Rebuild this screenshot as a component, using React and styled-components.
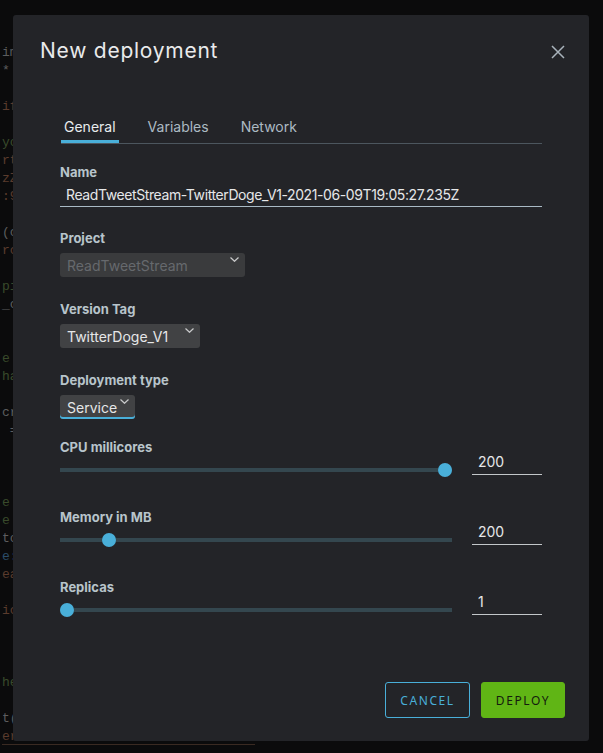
import React from "react"
import styled, { createGlobalStyle } from "styled-components"

const GlobalStyle = createGlobalStyle`
  html, body {
    margin: 0;
    padding: 0;
    background: #0b0b0c;
  }
  body {
    font-family: Inter, "Noto Sans", sans-serif;
  }
  * {
    box-sizing: border-box;
  }
`

const Page = styled.div`
  position: relative;
  width: 603px;
  height: 753px;
  overflow: hidden;
  background: #0b0b0c;
`

const Editor = styled.pre`
  margin: 0;
  padding: 44px 0 0 2px;
  font-family: "Liberation Mono", "DejaVu Sans Mono", monospace;
  font-size: 13px;
  line-height: 18px;
  white-space: pre;
`

const Code = styled.span`
  display: inline-block;
  width: ${p => (p.$underline ? "253px" : "auto")};
  height: 17px;
  color: ${p => p.$tone};
  border-bottom: 1px solid ${p => (p.$underline ? "#3a2a22" : "transparent")};
`

const Modal = styled.div`
  position: absolute;
  left: 13px;
  top: 15px;
  width: 576px;
  height: 726px;
  background: #232428;
  border-radius: 3px;
  display: flex;
  flex-direction: column;
  padding: 22px 24px 23px 27px;
`

const Header = styled.div`
  display: flex;
  justify-content: space-between;
  align-items: flex-start;
`

const Title = styled.h3`
  margin: 0;
  font-size: 21px;
  line-height: 28px;
  font-weight: 400;
  letter-spacing: 0.75px;
  color: #e9eaeb;
`

const Close = styled.button`
  margin-top: 8px;
  padding: 0;
  border: 0;
  background: none;
  width: 14px;
  height: 14px;
  display: flex;
`

const Body = styled.div`
  margin: 52px 23px 0 20px;
`

const Tabs = styled.div`
  display: flex;
  margin-left: 1px;
  border-bottom: 1px solid #4c565e;
`

const Tab = styled.div`
  height: 26px;
  line-height: 20px;
  font-size: 14px;
  padding: 0 3px;
  margin-right: 26px;
  color: ${p => (p.$active ? "#e8ecee" : "#acbac3")};
  box-shadow: ${p => (p.$active ? "inset 0 -3px 0 #49afd9" : "none")};
`

const Form = styled.div`
  margin-top: 20px;
`

const Field = styled.div`
  margin-bottom: ${p => p.$gap}px;
`

const Label = styled.label`
  display: block;
  height: 16px;
  font-size: 13px;
  line-height: 16px;
  font-weight: 700;
  color: #b8c4cb;
`

const TextInput = styled.input`
  display: block;
  width: 100%;
  height: 24px;
  margin-top: 3px;
  padding: 0 6px;
  border: 0;
  border-bottom: 1px solid #a9bac5;
  background: transparent;
  font-family: inherit;
  font-size: 14px;
  letter-spacing: -0.4px;
  color: #e6e7e8;
  outline: none;
`

const Select = styled.div`
  display: flex;
  width: ${p => p.$w}px;
  height: 24px;
  margin-top: 7px;
  padding: 0 6px 0 7px;
  border-radius: 3px;
  background: ${p => (p.$disabled ? "#3a3b3d" : "#414244")};
  box-shadow: ${p => (p.$focus ? "inset 0 -2px 0 #49afd9" : "none")};
  font-size: 14px;
  line-height: 26px;
  color: ${p => (p.$disabled ? "#66696d" : "#e6e7e8")};
`

const Chevron = styled.svg`
  margin-left: auto;
  margin-top: 4px;
  flex: none;
`

const SliderRow = styled.div`
  display: flex;
  align-items: flex-start;
  gap: 20px;
`

const Slider = styled.div`
  position: relative;
  flex: 1;
  height: 14px;
  margin-top: 8px;
`

const Track = styled.div`
  height: 4px;
  margin-top: 5px;
  background: #34474f;
`

const Thumb = styled.div`
  position: absolute;
  top: 0;
  width: 14px;
  height: 14px;
  border-radius: 50%;
  background: #49afd9;
`

const NumInput = styled.input`
  width: 70px;
  height: 20px;
  padding: 0 6px 7px;
  border: 0;
  border-bottom: 1px solid #c3c7ca;
  background: transparent;
  font-family: inherit;
  font-size: 14px;
  color: #e6e7e8;
  outline: none;
`

const Footer = styled.div`
  margin-top: auto;
  display: flex;
  justify-content: flex-end;
  gap: 11px;
`

const Button = styled.button`
  width: ${p => p.$w}px;
  height: 36px;
  border-radius: 3px;
  border: 1px solid ${p => (p.$primary ? "#60b515" : "#49afd9")};
  background: ${p => (p.$primary ? "#60b515" : "transparent")};
  color: ${p => (p.$primary ? "#141c0e" : "#49afd9")};
  font-family: "Noto Sans", sans-serif;
  font-size: 12px;
  letter-spacing: 1.6px;
  padding: 0;
`

// only the first columns of the editor peek out from behind the modal
const lines = [
  ["im", "#5c5d5e"],
  ["*", "#5c5d5e"],
  [""],
  ["if", "#5a3b2d"],
  [""],
  ["yo", "#394a2b"],
  ["rt", "#5a3b2d"],
  ["zZ", "#5a3b2d"],
  [":9", "#5a3b2d"],
  [""],
  ["(c", "#5c5d5e"],
  ["rc", "#5a3b2d"],
  [""],
  ["pi", "#394a2b"],
  ["_c", "#5c5d5e"],
  [""],
  [""],
  ["e", "#394a2b"],
  ["ha", "#394a2b"],
  [""],
  ["cr", "#5c5d5e"],
  [" =", "#5c5d5e"],
  [""],
  [""],
  [""],
  ["e", "#394a2b"],
  ["e", "#394a2b"],
  ["to", "#5c5d5e"],
  ["e:", "#2c4d69"],
  ["ea", "#5a3b2d"],
  [""],
  ["ic", "#5a3b2d"],
  [""],
  [""],
  [""],
  ["he", "#394a2b"],
  [""],
  ["t(", "#5c5d5e"],
  ["er", "#5a3b2d", true],
]

function Caret() {
  return (
    <Chevron width="9" height="5" viewBox="0 0 9 5">
      <path d="M0.5 0.5 L4.5 4.3 L8.5 0.5" fill="none" stroke="#c9cacb" strokeWidth="1.2" />
    </Chevron>
  )
}

function RangeField({ label, value, frac, gap }) {
  return (
    <Field $gap={gap}>
      <Label>{label}</Label>
      <SliderRow>
        <Slider>
          <Track />
          <Thumb style={{ left: `calc((100% - 14px) * ${frac})` }} />
        </Slider>
        <NumInput defaultValue={value} />
      </SliderRow>
    </Field>
  )
}

export default function App() {
  return (
    <Page>
      <GlobalStyle />
      <Editor>
        {lines.map(([text, tone, underline], i) => (
          <div key={i}>
            <Code $tone={tone} $underline={underline}>{text || " "}</Code>
          </div>
        ))}
      </Editor>
      <Modal>
        <Header>
          <Title>New deployment</Title>
          <Close aria-label="Close">
            <svg width="14" height="14" viewBox="0 0 14 14">
              <path d="M1 1 L13 13 M13 1 L1 13" stroke="#a9b3bb" strokeWidth="1.5" />
            </svg>
          </Close>
        </Header>
        <Body>
          <Tabs>
            <Tab $active>General</Tab>
            <Tab>Variables</Tab>
            <Tab>Network</Tab>
          </Tabs>
          <Form>
            <Field $gap={23}>
              <Label>Name</Label>
              <TextInput defaultValue="ReadTweetStream-TwitterDoge_V1-2021-06-09T19:05:27.235Z" />
            </Field>
            <Field $gap={24}>
              <Label>Project</Label>
              <Select $w={185} $disabled>
                ReadTweetStream
                <Caret />
              </Select>
            </Field>
            <Field $gap={24}>
              <Label>Version Tag</Label>
              <Select $w={140}>
                TwitterDoge_V1
                <Caret />
              </Select>
            </Field>
            <Field $gap={20}>
              <Label>Deployment type</Label>
              <Select $w={75} $focus>
                Service
                <Caret />
              </Select>
            </Field>
            <RangeField label="CPU millicores" value="200" frac={1} gap={32} />
            <RangeField label="Memory in MB" value="200" frac={0.111} gap={32} />
            <RangeField label="Replicas" value="1" frac={0} gap={0} />
          </Form>
        </Body>
        <Footer>
          <Button $w={85}>CANCEL</Button>
          <Button $w={84} $primary>DEPLOY</Button>
        </Footer>
      </Modal>
    </Page>
  )
}
